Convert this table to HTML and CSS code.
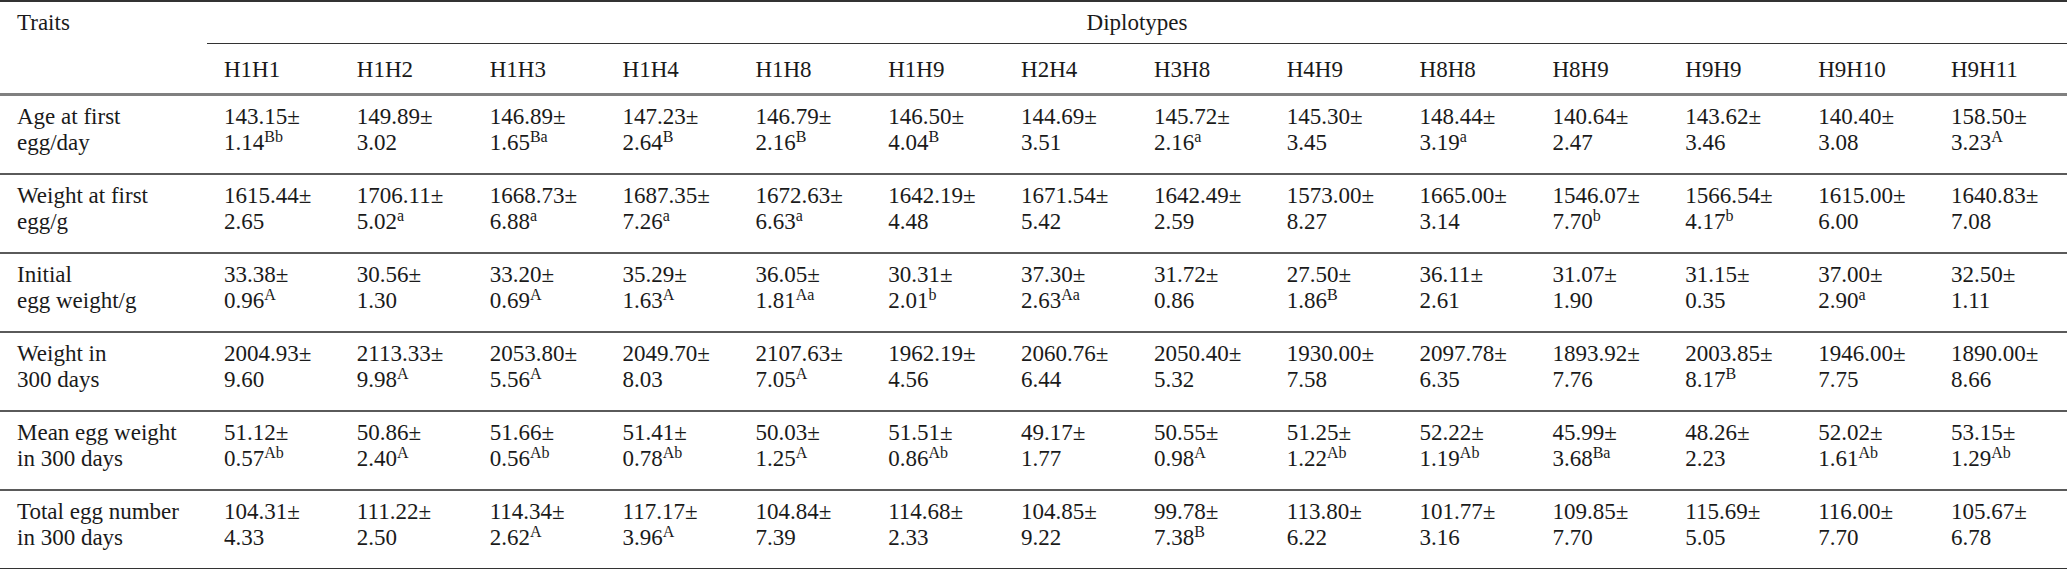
FILE: index.html
```html
<!DOCTYPE html>
<html lang="en">
<head>
    <meta charset="UTF-8">
    <title>Diplotypes and egg traits</title>
    <link rel="stylesheet" href="styles.css">
</head>
<body>
    <table class="tabela">
        <colgroup>
            <col class="col-traco">
            <col span="14">
        </colgroup>
        <thead>
            <tr class="topo">
                <th rowspan="2" class="traco">Traits</th>
                <th colspan="14" class="grupo">Diplotypes</th>
            </tr>
            <tr class="tipos">
                <th>H1H1</th><th>H1H2</th><th>H1H3</th><th>H1H4</th><th>H1H8</th><th>H1H9</th><th>H2H4</th>
                <th>H3H8</th><th>H4H9</th><th>H8H8</th><th>H8H9</th><th>H9H9</th><th>H9H10</th><th>H9H11</th>
            </tr>
        </thead>
        <tbody>
            <tr>
                <td>Age at first<br>egg/day</td>
                <td>143.15±<br>1.14<sup>Bb</sup></td>
                <td>149.89±<br>3.02</td>
                <td>146.89±<br>1.65<sup>Ba</sup></td>
                <td>147.23±<br>2.64<sup>B</sup></td>
                <td>146.79±<br>2.16<sup>B</sup></td>
                <td>146.50±<br>4.04<sup>B</sup></td>
                <td>144.69±<br>3.51</td>
                <td>145.72±<br>2.16<sup>a</sup></td>
                <td>145.30±<br>3.45</td>
                <td>148.44±<br>3.19<sup>a</sup></td>
                <td>140.64±<br>2.47</td>
                <td>143.62±<br>3.46</td>
                <td>140.40±<br>3.08</td>
                <td>158.50±<br>3.23<sup>A</sup></td>
            </tr>
            <tr>
                <td>Weight at first<br>egg/g</td>
                <td>1615.44±<br>2.65</td>
                <td>1706.11±<br>5.02<sup>a</sup></td>
                <td>1668.73±<br>6.88<sup>a</sup></td>
                <td>1687.35±<br>7.26<sup>a</sup></td>
                <td>1672.63±<br>6.63<sup>a</sup></td>
                <td>1642.19±<br>4.48</td>
                <td>1671.54±<br>5.42</td>
                <td>1642.49±<br>2.59</td>
                <td>1573.00±<br>8.27</td>
                <td>1665.00±<br>3.14</td>
                <td>1546.07±<br>7.70<sup>b</sup></td>
                <td>1566.54±<br>4.17<sup>b</sup></td>
                <td>1615.00±<br>6.00</td>
                <td>1640.83±<br>7.08</td>
            </tr>
            <tr>
                <td>Initial<br>egg weight/g</td>
                <td>33.38±<br>0.96<sup>A</sup></td>
                <td>30.56±<br>1.30</td>
                <td>33.20±<br>0.69<sup>A</sup></td>
                <td>35.29±<br>1.63<sup>A</sup></td>
                <td>36.05±<br>1.81<sup>Aa</sup></td>
                <td>30.31±<br>2.01<sup>b</sup></td>
                <td>37.30±<br>2.63<sup>Aa</sup></td>
                <td>31.72±<br>0.86</td>
                <td>27.50±<br>1.86<sup>B</sup></td>
                <td>36.11±<br>2.61</td>
                <td>31.07±<br>1.90</td>
                <td>31.15±<br>0.35</td>
                <td>37.00±<br>2.90<sup>a</sup></td>
                <td>32.50±<br>1.11</td>
            </tr>
            <tr>
                <td>Weight in<br>300 days</td>
                <td>2004.93±<br>9.60</td>
                <td>2113.33±<br>9.98<sup>A</sup></td>
                <td>2053.80±<br>5.56<sup>A</sup></td>
                <td>2049.70±<br>8.03</td>
                <td>2107.63±<br>7.05<sup>A</sup></td>
                <td>1962.19±<br>4.56</td>
                <td>2060.76±<br>6.44</td>
                <td>2050.40±<br>5.32</td>
                <td>1930.00±<br>7.58</td>
                <td>2097.78±<br>6.35</td>
                <td>1893.92±<br>7.76</td>
                <td>2003.85±<br>8.17<sup>B</sup></td>
                <td>1946.00±<br>7.75</td>
                <td>1890.00±<br>8.66</td>
            </tr>
            <tr>
                <td>Mean egg weight<br>in 300 days</td>
                <td>51.12±<br>0.57<sup>Ab</sup></td>
                <td>50.86±<br>2.40<sup>A</sup></td>
                <td>51.66±<br>0.56<sup>Ab</sup></td>
                <td>51.41±<br>0.78<sup>Ab</sup></td>
                <td>50.03±<br>1.25<sup>A</sup></td>
                <td>51.51±<br>0.86<sup>Ab</sup></td>
                <td>49.17±<br>1.77</td>
                <td>50.55±<br>0.98<sup>A</sup></td>
                <td>51.25±<br>1.22<sup>Ab</sup></td>
                <td>52.22±<br>1.19<sup>Ab</sup></td>
                <td>45.99±<br>3.68<sup>Ba</sup></td>
                <td>48.26±<br>2.23</td>
                <td>52.02±<br>1.61<sup>Ab</sup></td>
                <td>53.15±<br>1.29<sup>Ab</sup></td>
            </tr>
            <tr>
                <td>Total egg number<br>in 300 days</td>
                <td>104.31±<br>4.33</td>
                <td>111.22±<br>2.50</td>
                <td>114.34±<br>2.62<sup>A</sup></td>
                <td>117.17±<br>3.96<sup>A</sup></td>
                <td>104.84±<br>7.39</td>
                <td>114.68±<br>2.33</td>
                <td>104.85±<br>9.22</td>
                <td>99.78±<br>7.38<sup>B</sup></td>
                <td>113.80±<br>6.22</td>
                <td>101.77±<br>3.16</td>
                <td>109.85±<br>7.70</td>
                <td>115.69±<br>5.05</td>
                <td>116.00±<br>7.70</td>
                <td>105.67±<br>6.78</td>
            </tr>
        </tbody>
    </table>
</body>
</html>
```

FILE: styles.css
```css
body {
    margin: 0;
    background-color: #fff;
    font-family: "Liberation Serif", "Times New Roman", serif;
    font-size: 23px;
    color: #1a1a1a;
}

.tabela {
    width: 100%;
    border-collapse: collapse;
    table-layout: fixed;
}

.col-traco {
    width: 207px;
}

th,
td {
    font-weight: normal;
    text-align: left;
    vertical-align: top;
    line-height: 26px;
    padding: 0 0 0 17px;
    white-space: nowrap;
}

.topo th {
    border-top: 2px solid #333;
    padding-top: 8px;
    padding-bottom: 7px;
}

.topo .grupo {
    text-align: center;
    padding-left: 0;
    border-bottom: 1px solid #333;
}

.tipos th {
    padding-top: 13px;
    padding-bottom: 10px;
}

thead tr:last-child th,
thead .traco {
    border-bottom: 3px solid #808080;
}

tbody td {
    padding-top: 8px;
    padding-bottom: 17px;
    border-bottom: 2px solid #5a5a5a;
}

tbody tr:last-child td {
    border-bottom: 2px solid #333;
}

sup {
    font-size: 16px;
    line-height: 0;
    vertical-align: 8px;
}
```
